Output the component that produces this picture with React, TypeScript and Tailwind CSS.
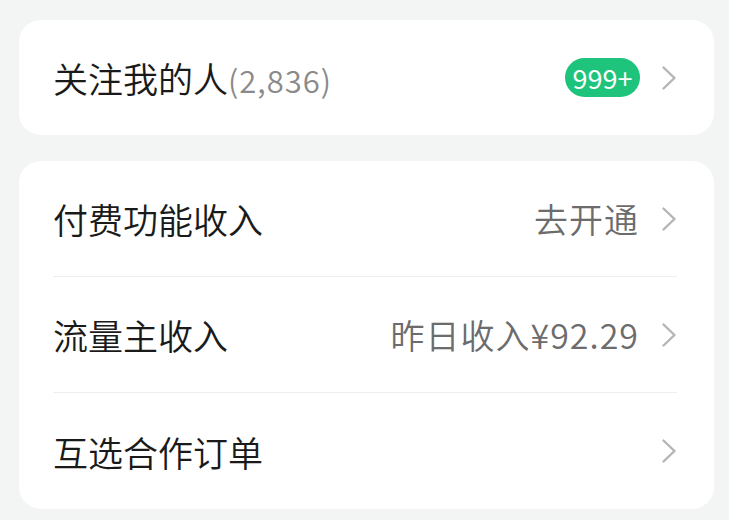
import React from "react";

const rows = [
  { title: "付费功能收入", value: "去开通" },
  { title: "流量主收入", value: "昨日收入¥92.29" },
  { title: "互选合作订单", value: "" },
];

function Chevron() {
  return (
    <svg className="w-[16px] h-[26px] shrink-0" viewBox="0 0 16 26" fill="none">
      <path d="M2.5 2.5l11 10.5-11 10.5" stroke="#b4b4b4" strokeWidth={2.4} strokeLinecap="round" strokeLinejoin="round" />
    </svg>
  );
}

export default function App() {
  return (
    <div
      className="w-[729px] h-[520px] bg-[#f3f5f4] pl-[19px] pr-[15px] pt-[20px] flex flex-col gap-[26px] font-[350]"
      style={{ fontFamily: '"Noto Sans CJK SC", "Noto Sans", sans-serif' }}
    >
      {/* followers */}
      <div className="bg-white rounded-[22px] h-[115px] pl-[34px] pr-[37px] flex items-center justify-between">
        <p className="text-[35px] text-[#1a1a1a] leading-none flex items-baseline">
          关注我的人<span className="text-[31px] text-[#8a8a8a] tracking-[1px]">(2,836)</span>
        </p>
        <div className="flex items-center gap-[21px]">
          <span className="bg-[#1ec47b] text-white rounded-full h-[39px] w-[75px] flex items-center justify-center text-[27px] font-normal leading-none">
            999+
          </span>
          <Chevron />
        </div>
      </div>

      {/* income */}
      <div className="bg-white rounded-[22px] pl-[34px] pr-[37px]">
        {rows.map((r, i) => (
          <div
            key={r.title}
            className={`h-[116px] flex items-center justify-between ${i < rows.length - 1 ? "border-b border-[#eeeeee]" : ""}`}
          >
            <span className="text-[35px] text-[#1a1a1a] leading-none">{r.title}</span>
            <div className="flex items-center gap-[22px]">
              {r.value && <span className="text-[34px] text-[#6c6c6c] leading-none tracking-[1px]">{r.value}</span>}
              <Chevron />
            </div>
          </div>
        ))}
      </div>
    </div>
  );
}
